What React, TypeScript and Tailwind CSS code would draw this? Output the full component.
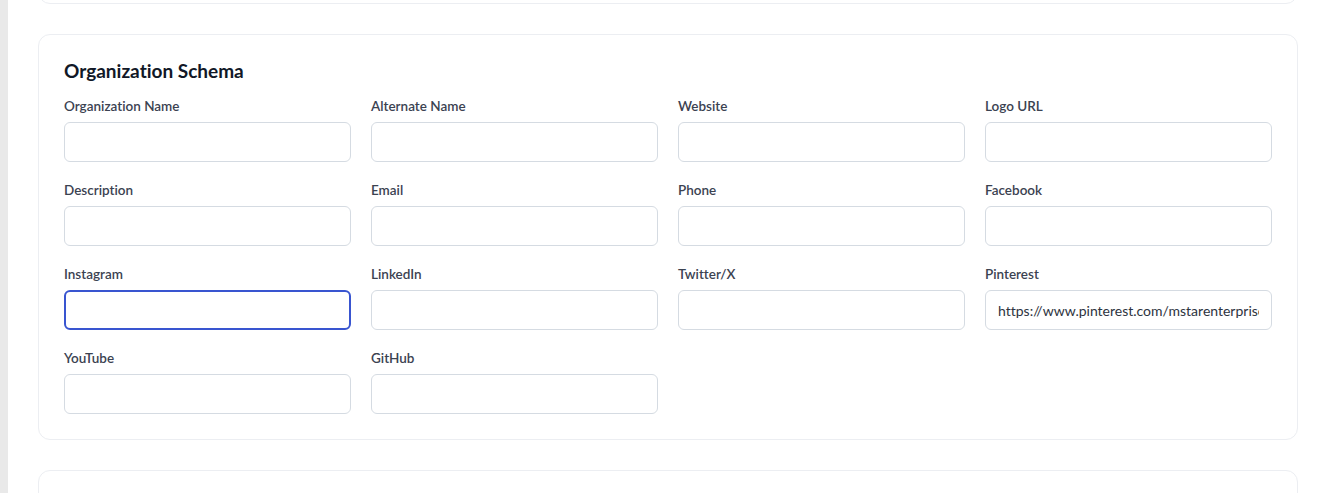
import React from 'react'

const fields = [
  { label: 'Organization Name', value: '' },
  { label: 'Alternate Name', value: '' },
  { label: 'Website', value: '' },
  { label: 'Logo URL', value: '' },
  { label: 'Description', value: '' },
  { label: 'Email', value: '' },
  { label: 'Phone', value: '' },
  { label: 'Facebook', value: '' },
  { label: 'Instagram', value: '', focused: true },
  { label: 'LinkedIn', value: '' },
  { label: 'Twitter/X', value: '' },
  { label: 'Pinterest', value: 'https://www.pinterest.com/mstarenterprises' },
  { label: 'YouTube', value: '' },
  { label: 'GitHub', value: '' },
]

const Field = ({ label, value, focused }: any) => {
  return (
    <div className="flex flex-col">
      <label className="text-[13.5px] leading-6 font-semibold text-[#3b4251] mb-1">{label}</label>
      <input
        type="text"
        defaultValue={value}
        className={
          focused
            ? 'h-10 w-full rounded-md border-2 border-[#3955d0] bg-white px-[12px] text-[14px] text-[#2d3340] outline-none'
            : 'h-10 w-full rounded-md border border-[#d5dbe2] bg-white px-[12px] text-[14px] text-[#2d3340] outline-none'
        }
      />
    </div>
  )
}

const App = () => {
  return (
    <div
      className="flex h-[493px] w-[1324px] overflow-hidden bg-white [font-variant-ligatures:none]"
      style={{ fontFamily: 'Lato, "Noto Sans", sans-serif' }}
    >
      <div className="w-2 shrink-0 bg-[#e9e9e9]"></div>
      <div className="flex-1 pl-[30px] pr-[26px]">
        <div className="-mt-[197px] flex flex-col gap-[30px]">
          <div className="h-[201px] rounded-xl border border-[#eceef2] bg-white"></div>

          <div className="rounded-xl border border-[#eceef2] bg-white px-[25px] pt-6 pb-[25px]">
            <h2 className="mb-[11px] text-[19px] leading-6 font-bold text-[#111827]">Organization Schema</h2>
            <div className="grid grid-cols-4 gap-x-5 gap-y-4">
              {fields.map((f) => (
                <Field key={f.label} label={f.label} value={f.value} focused={f.focused} />
              ))}
            </div>
          </div>

          <div className="h-[200px] rounded-xl border border-[#eceef2] bg-white"></div>
        </div>
      </div>
    </div>
  )
}

export default App
